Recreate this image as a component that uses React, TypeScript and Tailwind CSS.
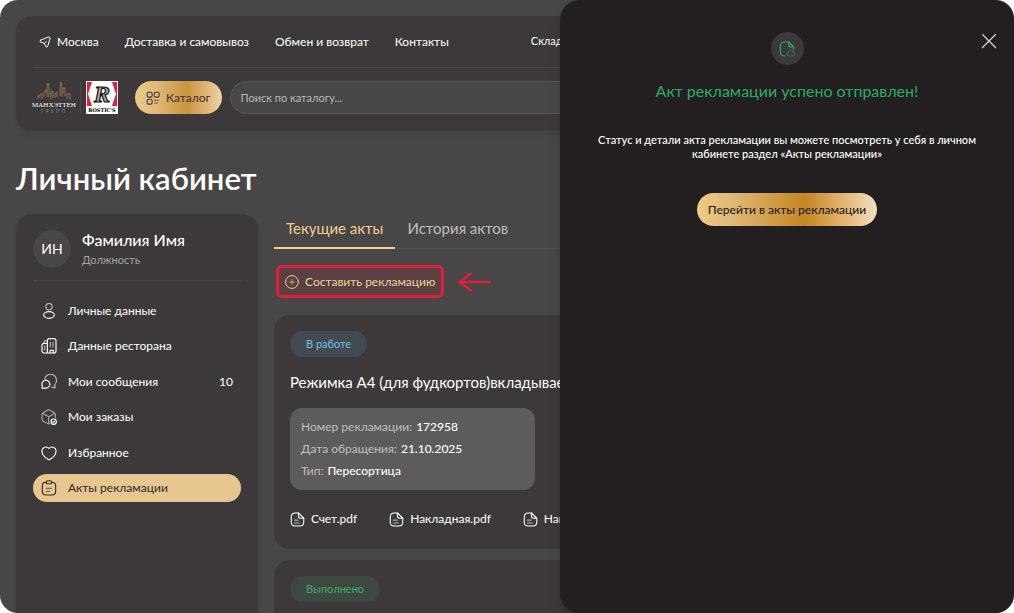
import React from 'react';
import { X } from 'lucide-react';

type IconProps = { className?: string };

const stroke = {
  fill: 'none',
  stroke: 'currentColor',
  strokeWidth: 1.7,
  strokeLinecap: 'round' as const,
  strokeLinejoin: 'round' as const,
  viewBox: '0 0 24 24',
  'aria-hidden': true,
};

const LocationIcon = ({ className }: IconProps) => (
  <svg {...stroke} strokeWidth={2} className={className}>
    <path d="M3 8.500 18 2.200c3-.9 4.600.9 3.900 3.600L17.500 20c-.9 2.700-3.600 2.700-4.500.2l-1.700-4.400c-.3-.8-.7-1.200-1.500-1.600L3.200 12.300c-2-.9-2-2.900-.2-3.800Z" />
    <path d="m11 14.500 3.500-3.500" />
  </svg>
);

const CatalogIcon = ({ className }: IconProps) => (
  <svg {...stroke} strokeWidth={1.8} className={className}>
    <rect x="2" y="2" width="8.500" height="8.500" rx="2.500" />
    <rect x="14" y="2" width="8.500" height="8.500" rx="2.500" />
    <rect x="2" y="14" width="8.500" height="8.500" rx="2.500" />
    <path d="M14.500 16h7.500M14.500 20.500h5.500" opacity=".7" />
  </svg>
);

const UserIcon = ({ className }: IconProps) => (
  <svg {...stroke} className={className}>
    <circle cx="12" cy="5.500" r="4.700" opacity=".65" />
    <ellipse cx="12" cy="18" rx="8" ry="5" />
  </svg>
);

const BuildingIcon = ({ className }: IconProps) => (
  <svg {...stroke} className={className}>
    <path d="M9.500 22.500V4a3 3 0 0 1 3-3h7a3 3 0 0 1 3 3v15.500a3 3 0 0 1-3 3h-15a3 3 0 0 1-3-3V11a3 3 0 0 1 3-3h5" />
    <path d="M13.500 22.500v-4h5v4" />
    <path d="M14 6.500v7M18 6.500v7M5.500 12v6M4.500 8V6a2 2 0 0 1 2-2h3" opacity=".6" />
  </svg>
);

const MessagesIcon = ({ className }: IconProps) => (
  <svg {...stroke} className={className}>
    <path d="M5.500 7.500A9 9 0 1 1 20.500 16l.8 3.600c.2.8-.4 1.400-1.200 1.200l-4.100-1.200" opacity=".65" />
    <path d="M7.200 9.200a6 6 0 1 1-1.800 11.700l-3 .9c-.6.100-1-.4-.9-.9l.7-2.700A6 6 0 0 1 7.200 9.200Z" />
  </svg>
);

const BoxIcon = ({ className }: IconProps) => (
  <svg {...stroke} className={className}>
    <path d="M13 22c-1 .5-2 .4-3-.1l-6.200-3.300C2.300 17.700 1.500 16.600 1.500 15V8.500c0-1.500.7-2.600 2.100-3.400L9.500 1.800c1.400-.8 2.600-.8 4 0l6 3.300c1.400.8 2.100 1.900 2.100 3.400V13M2.200 6.500l9.300 5.300 9.400-5.300M11.500 12v10.300" opacity=".55" />
    <circle cx="19" cy="19" r="4" />
    <path d="m17.500 19.200 1.100 1.100 2-2.300" />
  </svg>
);

const HeartIcon = ({ className }: IconProps) => (
  <svg {...stroke} className={className}>
    <path d="M12.700 21.800c-.4.200-1 .2-1.400 0C8 20.500 1.300 16 1.300 8.700A6.200 6.200 0 0 1 12 5a6.200 6.200 0 0 1 10.700 3.700c0 7.300-6.700 11.800-10 13.100Z" />
  </svg>
);

const ClipboardIcon = ({ className }: IconProps) => (
  <svg {...stroke} className={className}>
    <path d="M8 3.300C4 3.300 2 4.500 2 8.500v8.300c0 4 2 5.700 5.500 5.700h9c3.500 0 5.500-1.700 5.500-5.700V8.500c0-4-2-5.200-6-5.200" />
    <rect x="8" y="1.200" width="8" height="4.500" rx="2" />
    <path d="M8 12.500h8M8 17h5" opacity=".6" />
  </svg>
);

const FileIcon = ({ className }: IconProps) => (
  <svg {...stroke} className={className}>
    <path d="M22 10v6c0 4.800-1.700 6.500-6.500 6.500h-7C3.700 22.500 2 20.800 2 16V8c0-4.800 1.700-6.500 6.500-6.500h5" />
    <path d="M22 10h-5c-3 0-3.500-1-3.500-3.500v-5L22 10Z" />
    <path d="M7 13h6M7 17.500h8" opacity=".6" />
  </svg>
);

const FileSentIcon = ({ className }: IconProps) => (
  <svg {...stroke} className={className}>
    <path d="M8.500 22.500C3.700 22.500 2 20.800 2 16V8c0-4.800 1.700-6.500 6.500-6.500h6L22 9v4" />
    <path d="M14.500 1.500v4C14.500 8 15.500 9 18 9h4" />
    <path d="M14.500 22.500c-3.400 0-3.400-4.600-.2-4.700-.9-5.100 6.300-6 7-1.200 3 .8 2.600 5.900-.8 5.900h-6Z" opacity=".5" />
  </svg>
);

const PlusCircleIcon = ({ className }: IconProps) => (
  <svg {...stroke} className={className}>
    <circle cx="12" cy="12" r="11" />
    <path d="M7.500 12h9M12 7.500v9" opacity=".65" />
  </svg>
);

const ManhattanLogo = () => (
  <a href="#" aria-label="Манхэттен групп" className="flex w-[42px] flex-col items-center">
    <svg viewBox="0 0 34 20" className="h-5 w-[34px]" fill="none" stroke="#b08851" strokeWidth=".7" aria-hidden="true">
      <path d="M1 18v-3h2v-2h2v5m2-2v-5h2v-3m1 8V6l1-4 1 4v10m2 2v-6l2-2v7m2 0v-4l2-2v5m3-1V7l1-6 1 6v9m1-3V7h2v8m2 3v-5h3v6" />
      <path d="M4 18v-2m10 0V8m5 8v-4m6 1V9m6 8v-2" stroke="#78654b" />
    </svg>
    <span className="font-['Liberation_Serif',serif] text-[7px] leading-[8px] text-white">МАНХЭТТЕН</span>
    <span className="text-[5px] leading-[5px] tracking-[2px] text-[#8d8a8b]">ГРУПП</span>
  </a>
);

const RosticsLogo = () => (
  <a href="#" aria-label="Rostic's" className="flex h-[33px] w-8 flex-col items-center bg-white">
    <svg viewBox="0 0 32 26" className="h-[26px] w-8" aria-hidden="true">
      <path fill="#ed1c3c" d="M1 1h5L2 13l4 12H1ZM31 1h-5l4 12-4 12h5Z" />
      <text x="16" y="21" textAnchor="middle" fontFamily="Liberation Serif, serif" fontSize="24" fontWeight="700" fontStyle="italic" fill="#aaa" stroke="#111" strokeWidth="1.200">R</text>
    </svg>
    <span className="font-['DejaVu_Serif',serif] text-[5px] font-bold leading-[6px] text-black">ROSTIC'S</span>
  </a>
);

const NAV_LINKS = ['Доставка и самовывоз', 'Обмен и возврат', 'Контакты'];

const MENU = [
  { label: 'Личные данные', icon: UserIcon },
  { label: 'Данные ресторана', icon: BuildingIcon },
  { label: 'Мои сообщения', icon: MessagesIcon, count: 10 },
  { label: 'Мои заказы', icon: BoxIcon },
  { label: 'Избранное', icon: HeartIcon },
  { label: 'Акты рекламации', icon: ClipboardIcon, active: true },
];

const DETAILS = [
  ['Номер рекламации:', '172958'],
  ['Дата обращения:', '21.10.2025'],
  ['Тип:', 'Пересортица'],
];

const FILES = ['Счет.pdf', 'Накладная.pdf', 'Накладная.pdf'];

const Header = () => (
  <header className="rounded-2xl bg-[#3d393a] px-[17px] shadow-md shadow-black/10">
    <nav className="flex h-[52px] items-center gap-[26px] whitespace-nowrap border-b border-[#484647] px-1.5 text-xs">
      <a href="#" className="flex items-center gap-1.5">
        <LocationIcon className="size-3" />
        Москва
      </a>
      {NAV_LINKS.map((link) => <a key={link} href="#">{link}</a>)}
      <a href="#" className="ml-14 text-[11px]">Склад</a>
    </nav>
    <div className="flex items-center pt-[13px] pb-4">
      <ManhattanLogo />
      <div className="mx-[5px] h-8 w-px bg-[#4c494a]" />
      <RosticsLogo />
      <button type="button" className="ml-[17px] flex h-[33px] shrink-0 items-center gap-1.5 rounded-full bg-[linear-gradient(90deg,#eacb8b,#e0b878_25%,#c8943e_60%,#e5bb7c_85%,#ead4b0)] px-[11px] text-xs text-[#3a3332]">
        <CatalogIcon className="size-3.5" />
        Каталог
      </button>
      <input type="search" aria-label="Поиск по каталогу" placeholder="Поиск по каталогу..." className="ml-2 h-[33px] min-w-0 flex-1 rounded-full border border-[#5b595a] bg-[#484647] px-2.5 text-[11px] outline-none placeholder:text-[#bab9b9]" />
    </div>
  </header>
);

const Sidebar = () => (
  <aside className="w-[242px] shrink-0 rounded-t-2xl bg-[#3d393a] px-[17px] pt-4 shadow-md shadow-black/10">
    <div className="flex h-[51px] items-start gap-[11px] border-b border-[#4b4849]">
      <div className="flex size-[38px] items-center justify-center rounded-full bg-[#484647] text-sm">ИН</div>
      <div>
        <div className="text-base leading-5 font-medium">Фамилия Имя</div>
        <div className="text-[11px] leading-5 text-[#a5a3a4]">Должность</div>
      </div>
    </div>
    <nav className="mt-4 flex h-[205px] flex-col justify-between text-xs">
      {MENU.map(({ label, icon: Icon, count, active }) => (
        <a key={label} href="#" className={active ? 'flex h-7 items-center gap-[11px] rounded-full bg-[#e7c78f] px-2 text-[#2e2a2b]' : 'flex h-7 items-center gap-[11px] px-2'}>
          <Icon className="size-4" />
          <span className="flex-1">{label}</span>
          {count && <span>{count}</span>}
        </a>
      ))}
    </nav>
  </aside>
);

const Acts = () => (
  <section className="min-w-0 flex-1 whitespace-nowrap">
    <div className="flex h-[35px] border-b border-[#514f50] text-[15px]" role="tablist">
      <button type="button" role="tab" aria-selected="true" className="h-[35px] border-b-2 border-[#f0d08d] px-3 pb-1 text-[#f0d08d]">Текущие акты</button>
      <button type="button" role="tab" aria-selected="false" className="h-[35px] px-3 pb-1.5 text-[#bfbebe]">История актов</button>
    </div>

    <div className="mt-4 flex items-center gap-3.5 pl-0.5">
      <button type="button" className="flex h-[33px] items-center gap-1.5 rounded-md border-[3px] border-[#e31e38] bg-[#5a4043] px-1.5 text-xs text-[#f0d399]">
        <PlusCircleIcon className="size-3.5" />
        Составить рекламацию
      </button>
      <svg viewBox="0 0 34 20" className="h-5 w-[34px]" fill="none" stroke="#e31e38" strokeWidth="2.400" strokeLinecap="round" strokeLinejoin="round" aria-hidden="true">
        <path d="M32 10H1.500M13 1.500 1.500 10 13 18.500" />
      </svg>
    </div>

    <article className="mt-[17px] rounded-2xl bg-[#3d393a] p-4 pb-5">
      <span className="flex h-[26px] w-fit items-center rounded-full bg-[#434a50] px-4 text-[11px] text-[#6fc0e8]">В работе</span>
      <h2 className="mt-[13px] text-[15px] leading-6">Режимка А4 (для фудкортов)вкладывается</h2>
      <dl className="mt-3.5 w-[245px] rounded-xl bg-[#5d5b5c] px-[11px] py-2 text-xs leading-[22px]">
        {DETAILS.map(([name, value]) => (
          <div key={name} className="flex gap-1">
            <dt className="text-[#c0bfbf]">{name}</dt>
            <dd className="font-medium">{value}</dd>
          </div>
        ))}
      </dl>
      <div className="mt-[19px] flex gap-8 text-xs leading-5">
        {FILES.map((file, i) => (
          <a key={i} href="#" className="flex items-center gap-1.5">
            <FileIcon className="size-[15px]" />
            {file}
          </a>
        ))}
      </div>
    </article>

    <article className="mt-[11px] rounded-2xl bg-[#3d393a] p-4 pb-24">
      <span className="flex h-[26px] w-fit items-center rounded-full bg-[#3f4741] px-4 text-[11px] text-[#3fa972]">Выполнено</span>
    </article>
  </section>
);

const SuccessDrawer = () => (
  <div role="dialog" aria-labelledby="drawer-title" className="absolute inset-y-0 right-0 flex w-[454px] flex-col items-center rounded-[20px] bg-[#231f20] px-8 pt-8 text-center shadow-lg shadow-black/20">
    <button type="button" aria-label="Закрыть" className="absolute top-7 right-3 text-[#d6d5d5]">
      <X className="size-[26px]" strokeWidth={1.200} />
    </button>
    <div className="flex size-[33px] items-center justify-center rounded-full bg-[#3d393a] text-[#27ae68]">
      <FileSentIcon className="size-4" />
    </div>
    <h2 id="drawer-title" className="mt-3.5 text-base leading-6 text-[#27ae68]">Акт рекламации успено отправлен!</h2>
    <p className="mt-[30px] text-[11px] leading-[14px] font-medium">
      Статус и детали акта рекламации вы можете посмотреть у себя в личном
      <br />
      кабинете раздел «Акты рекламации»
    </p>
    <button type="button" className="mt-8 h-[33px] rounded-full bg-[linear-gradient(90deg,#f0cb83,#dfb777_20%,#c58622_60%,#e9bd80_85%,#efdfc5)] px-[11px] text-xs font-medium text-[#231f20]">
      Перейти в акты рекламации
    </button>
  </div>
);

const App: React.FC = () => {
  return (
    <div className="relative flex h-screen flex-col overflow-hidden rounded-[18px] bg-[#484647] px-4 pt-4 font-['Lato','Open_Sans',sans-serif] text-white">
      <Header />
      <h1 className="mt-7 text-[31px] leading-10 font-semibold">Личный кабинет</h1>
      <main className="mt-4 flex min-h-0 flex-1 gap-4">
        <Sidebar />
        <Acts />
      </main>
      <SuccessDrawer />
    </div>
  );
};

export default App;
